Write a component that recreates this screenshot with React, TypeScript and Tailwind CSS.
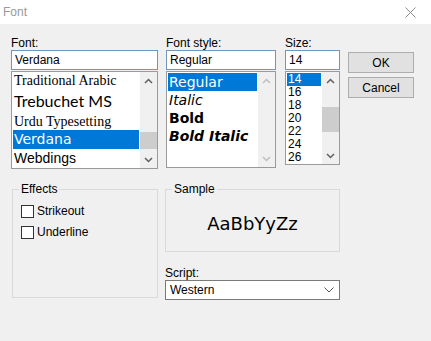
import React from 'react';

const sans = "font-['Liberation_Sans',Arial,sans-serif]";
const verdana = "font-['DejaVu_Sans',Verdana,sans-serif]";
const serif = "font-['Liberation_Serif','Times_New_Roman',serif]";

function Arrow({ up, muted }: { up?: boolean; muted?: boolean }) {
  return (
    <svg width="9" height="6" viewBox="0 0 9 6" className={muted ? 'stroke-[#bfbfbf]' : 'stroke-[#606060]'}>
      <path d={up ? 'M1 5 L4.5 1.5 L8 5' : 'M1 1 L4.5 4.5 L8 1'} fill="none" strokeWidth="1.5" />
    </svg>
  );
}

function ScrollBar({ thumbClass, muted }: { thumbClass?: string; muted?: boolean }) {
  return (
    <div className="w-[17px] flex flex-col bg-[#f0f0f0]">
      <div className="h-[17px] flex items-center justify-center">
        <Arrow up muted={muted} />
      </div>
      <div className="flex-1">{thumbClass && <div className={thumbClass} />}</div>
      <div className="h-[17px] flex items-center justify-center">
        <Arrow muted={muted} />
      </div>
    </div>
  );
}

function Label({ children }: { children: React.ReactNode }) {
  return <div className="h-[14px] text-[12px] leading-[14px] text-black">{children}</div>;
}

function TextBox({ value }: { value: string }) {
  return (
    <div className="h-[20px] border border-[#7196bd] bg-white px-[3px] text-[12px] leading-[18px] text-black">
      {value}
    </div>
  );
}

function CheckBox({ label }: { label: string }) {
  return (
    <div className="flex items-center gap-[3px] h-[13px]">
      <div className="w-[13px] h-[13px] border border-[#333333] bg-white" />
      <span className="text-[12px] leading-[13px] text-black">{label}</span>
    </div>
  );
}

export default function App() {
  const fonts = [
    { name: 'Traditional Arabic', cls: `${serif} text-[14px] h-[18px] leading-[16px]` },
    { name: 'Trebuchet MS', cls: "font-['Lato',sans-serif] text-[16px] h-[20px] leading-[20px]" },
    { name: 'Urdu Typesetting', cls: `${serif} text-[14px] h-[19px] leading-[22px]` },
    { name: 'Verdana', cls: `${verdana} text-[14px] h-[19px] leading-[19px]`, selected: true },
    { name: 'Webdings', cls: `${sans} text-[14px] h-[19px] leading-[19px]` },
  ];

  const styles = [
    { name: 'Regular', cls: '', selected: true },
    { name: 'Italic', cls: 'italic' },
    { name: 'Bold', cls: 'font-bold' },
    { name: 'Bold Italic', cls: 'font-bold italic' },
  ];

  const sizes = ['14', '16', '18', '20', '22', '24', '26'];

  return (
    <div className={`w-[431px] h-[341px] bg-[#f0f0f0] ${sans} overflow-hidden`}>
      {/* Title bar */}
      <div className="h-[24px] bg-white flex items-center justify-between pl-[3px] pr-[15px]">
        <span className="text-[12px] text-[#999999]">Font</span>
        <svg width="11" height="11" viewBox="0 0 11 11" className="stroke-[#8a8a8a]">
          <path d="M0.5 0.5 L10.5 10.5 M10.5 0.5 L0.5 10.5" strokeWidth="1" />
        </svg>
      </div>

      <div className="pt-[12px] pl-[11px]">
        {/* Top row */}
        <div className="flex">
          {/* Font */}
          <div className="w-[147px] flex flex-col">
            <Label>Font:</Label>
            <TextBox value="Verdana" />
            <div className="mt-[1px] h-[98px] border border-[#9a9a9a] bg-white flex">
              <div className="flex-1 p-[1px] overflow-hidden">
                {fonts.map((f) => (
                  <div
                    key={f.name}
                    className={`${f.cls} whitespace-nowrap px-[1px] ${f.selected ? 'bg-[#0078d7] text-white' : 'text-black'}`}
                  >
                    {f.name}
                  </div>
                ))}
              </div>
              <ScrollBar thumbClass="mt-[43px] h-[17px] bg-[#cdcdcd]" />
            </div>
          </div>

          {/* Font style */}
          <div className="w-[110px] ml-[8px] flex flex-col">
            <Label>Font style:</Label>
            <TextBox value="Regular" />
            <div className="mt-[1px] h-[97px] border border-[#9a9a9a] bg-white flex">
              <div className={`flex-1 p-[1px] ${verdana} text-[14px]`}>
                {styles.map((s) => (
                  <div
                    key={s.name}
                    className={`${s.cls} h-[18px] leading-[18px] px-[1px] whitespace-nowrap ${s.selected ? 'bg-[#0078d7] text-white' : 'text-black'}`}
                  >
                    {s.name}
                  </div>
                ))}
              </div>
              <ScrollBar muted />
            </div>
          </div>

          {/* Size */}
          <div className="w-[55px] ml-[9px] flex flex-col">
            <Label>Size:</Label>
            <TextBox value="14" />
            <div className="mt-[1px] h-[94px] border border-[#9a9a9a] bg-white flex">
              <div className="flex-1 p-[1px] text-[12px]">
                {sizes.map((s, i) => (
                  <div
                    key={s}
                    className={`h-[13px] leading-[13px] px-[1px] ${i === 0 ? 'bg-[#0078d7] text-white' : 'text-black'}`}
                  >
                    {s}
                  </div>
                ))}
              </div>
              <ScrollBar thumbClass="mt-[18px] h-[25px] bg-[#cdcdcd]" />
            </div>
          </div>

          {/* Buttons */}
          <div className="w-[66px] ml-[8px] mt-[16px] flex flex-col gap-[4px]">
            <button className="h-[21px] border border-[#adadad] bg-[#e1e1e1] text-[12px] text-black">OK</button>
            <button className="h-[21px] border border-[#adadad] bg-[#e1e1e1] text-[12px] text-black">Cancel</button>
          </div>
        </div>

        {/* Bottom row */}
        <div className="flex mt-[13px]">
          <fieldset className="ml-[1px] w-[146px] h-[116px] border border-[#d9d9d9] pl-[8px]">
            <legend className="-ml-[2px] px-[2px] text-[12px] leading-[14px] text-black">Effects</legend>
            <div className="mt-[9px] flex flex-col gap-[8px]">
              <CheckBox label="Strikeout" />
              <CheckBox label="Underline" />
            </div>
          </fieldset>

          <div className="ml-[7px] w-[175px] flex flex-col">
            <fieldset className="h-[70px] border border-[#d9d9d9]">
              <legend className="ml-[6px] px-[2px] text-[12px] leading-[14px] text-black">Sample</legend>
              <div className={`h-[54px] flex items-center justify-center ${verdana} text-[18px] text-black`}>
                AaBbYyZz
              </div>
            </fieldset>
            <div className="mt-[14px]">
              <Label>Script:</Label>
            </div>
            <div className="h-[20px] border border-[#7a7a7a] bg-white flex items-center justify-between pl-[4px] pr-[5px] text-[12px] text-black">
              <span>Western</span>
              <svg width="10" height="6" viewBox="0 0 10 6" className="stroke-[#555555]">
                <path d="M0.5 0.5 L5 5 L9.5 0.5" fill="none" strokeWidth="1" />
              </svg>
            </div>
          </div>
        </div>
      </div>
    </div>
  );
}
